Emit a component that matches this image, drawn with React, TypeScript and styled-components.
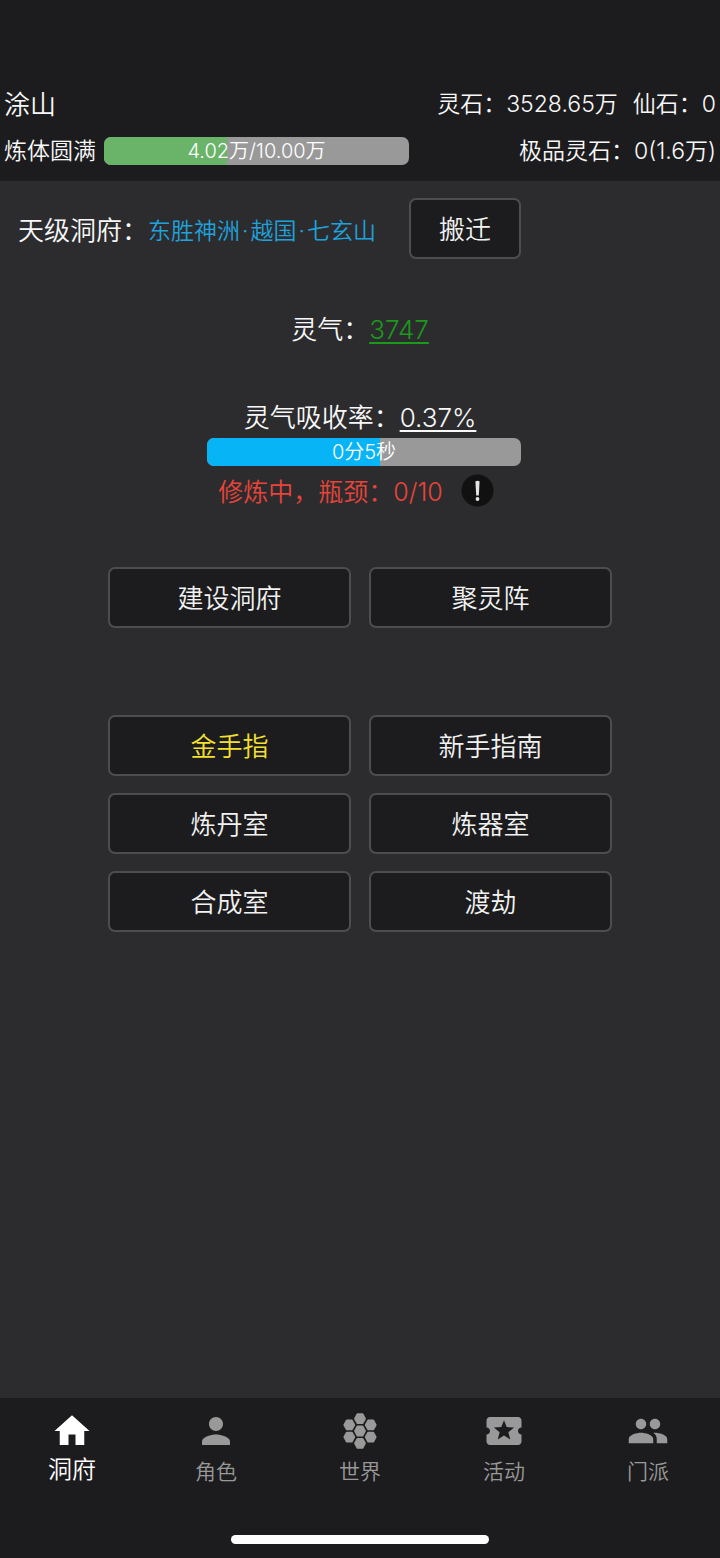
import React from 'react';
import styled, { createGlobalStyle } from 'styled-components';
import { MdHome, MdPerson, MdLocalActivity, MdPeople } from 'react-icons/md';

const GlobalStyle = createGlobalStyle`
  * { box-sizing: border-box; }
  body {
    margin: 0;
    background: #2c2c2e;
    color: #f8f8f8;
    font-family: Inter, "Noto Sans CJK SC", sans-serif;
    font-size: 26px;
    font-weight: 350;
  }
`;

const Page = styled.div`
  min-height: 100vh;
  display: flex;
  flex-direction: column;
`;

const Header = styled.header`
  display: flex;
  flex-direction: column;
  gap: 9px;
  padding: 85px 4px 11px;
  background: #1c1c1e;
`;

const HeaderRow = styled.div`
  display: flex;
  align-items: center;
  justify-content: space-between;
  height: 38px;
  font-size: 23px;
  white-space: nowrap;
`;

const HeaderText = styled.span`
  padding-bottom: 4px;
`;

const PlayerName = styled.h1`
  margin: 0;
  padding-bottom: 4px;
  font-size: 26px;
  font-weight: inherit;
`;

const Group = styled.div<{ $gap: number }>`
  display: flex;
  align-items: center;
  gap: ${(p) => p.$gap}px;
`;

const Track = styled.div<{ $width: number }>`
  position: relative;
  width: ${(p) => p.$width}px;
  height: 28px;
  border-radius: 7px;
  overflow: hidden;
  background: #999999;
`;

const Fill = styled.div<{ $color: string }>`
  height: 100%;
  background: ${(p) => p.$color};
`;

const TrackLabel = styled.span`
  position: absolute;
  inset: 0;
  color: #ffffff;
  font-size: 20px;
  line-height: 29px;
  text-align: center;
`;

const Main = styled.main`
  flex: 1;
  display: flex;
  flex-direction: column;
  padding-top: 17px;
`;

const LocationRow = styled.section`
  display: flex;
  align-items: center;
  padding: 0 18px;
  white-space: nowrap;
`;

const Place = styled.a`
  display: flex;
  align-items: baseline;
  gap: 2px;
  margin-right: 33px;
  color: #1fa2dc;
  font-size: 23px;
  text-decoration: none;
`;

const Button = styled.button<{ $color?: string }>`
  height: 61px;
  padding: 0 28px 2px;
  border: 2px solid #4d4d4f;
  border-radius: 7px;
  background: #1c1c1e;
  color: ${(p) => p.$color ?? '#f2f2f2'};
  font: inherit;
`;

const Stat = styled.section<{ $top: number }>`
  margin-top: ${(p) => p.$top}px;
  line-height: 40px;
  text-align: center;
`;

const StatLink = styled.a<{ $color?: string }>`
  color: ${(p) => p.$color ?? 'inherit'};
  text-decoration: underline;
  text-decoration-thickness: 2px;
  text-underline-offset: 3px;
`;

const Cultivation = styled.div`
  display: flex;
  justify-content: center;
  padding-left: 8px;
`;

const Status = styled.div`
  display: flex;
  align-items: center;
  justify-content: center;
  gap: 18px;
  height: 48px;
  padding-right: 8px;
  color: #e8443a;
  font-size: 25px;
`;

const InfoButton = styled.button`
  display: flex;
  padding: 0;
  border: 0;
  border-radius: 50%;
  background: none;
`;

const ButtonGrid = styled.section<{ $top: number }>`
  display: grid;
  grid-template-columns: 1fr 1fr;
  gap: 17px 18px;
  width: 70%;
  margin: ${(p) => p.$top}px auto 0;
`;

const Footer = styled.footer`
  display: flex;
  flex-direction: column;
  align-items: center;
  justify-content: space-between;
  height: 160px;
  padding: 12px 0 14px;
  background: #1c1c1e;
`;

const Tabs = styled.nav`
  display: flex;
  width: 100%;
`;

const Tab = styled.a<{ $active?: boolean }>`
  flex: 1;
  display: flex;
  flex-direction: column;
  align-items: center;
  color: ${(p) => (p.$active ? '#ffffff' : '#999999')};
  font-size: ${(p) => (p.$active ? 24 : 21)}px;
  line-height: ${(p) => (p.$active ? 36 : 40)}px;
  text-decoration: none;
`;

const HomeIndicator = styled.div`
  width: 258px;
  height: 9px;
  border-radius: 5px;
  background: #ffffff;
`;

const cells = [
  [21, 21],
  [21, 8.7],
  [21, 33.3],
  [10.3, 14.9],
  [31.7, 14.9],
  [10.3, 27.1],
  [31.7, 27.1],
];

const WorldIcon = () => (
  <svg width="42" height="42" viewBox="0 0 42 42" fill="currentColor" stroke="currentColor" strokeWidth="2" strokeLinejoin="round" aria-hidden="true">
    {cells.map(([x, y]) => (
      <path key={`${x}-${y}`} d={`M${x - 4.9} ${y}l2.4-4.4h5l2.4 4.4l-2.4 4.4h-5z`} />
    ))}
  </svg>
);

const AlertIcon = () => (
  <svg width="33" height="33" viewBox="0 0 33 33" aria-hidden="true">
    <circle cx="16.5" cy="16.5" r="16" fill="#111112" />
    <path d="M14.4 7.6q2.1-1.6 4.2 0l-.8 14h-2.6z" fill="#e4e4e4" />
    <circle cx="16.5" cy="25" r="1.9" fill="#e4e4e4" />
  </svg>
);

const placePath = ['东胜神洲', '·', '越国', '·', '七玄山'];

const homeActions = ['建设洞府', '聚灵阵'];

const roomActions: { label: string; color?: string }[] = [
  { label: '金手指', color: '#f5e02d' },
  { label: '新手指南' },
  { label: '炼丹室' },
  { label: '炼器室' },
  { label: '合成室' },
  { label: '渡劫' },
];

const tabs = [
  { label: '洞府', icon: <MdHome size={42} />, active: true },
  { label: '角色', icon: <MdPerson size={42} /> },
  { label: '世界', icon: <WorldIcon /> },
  { label: '活动', icon: <MdLocalActivity size={42} /> },
  { label: '门派', icon: <MdPeople size={42} /> },
];

const Progress = ({ label, width, value, color }: { label: string; width: number; value: number; color: string }) => (
  <Track $width={width} role="progressbar" aria-label={label} aria-valuenow={value} aria-valuemin={0} aria-valuemax={100}>
    <Fill $color={color} style={{ width: `${value}%` }} />
    <TrackLabel>{label}</TrackLabel>
  </Track>
);

export default function App() {
  return (
    <Page>
      <GlobalStyle />
      <Header>
        <HeaderRow>
          <PlayerName>涂山</PlayerName>
          <Group $gap={15}>
            <HeaderText>灵石：3528.65万</HeaderText>
            <HeaderText>仙石：0</HeaderText>
          </Group>
        </HeaderRow>
        <HeaderRow>
          <Group $gap={8}>
            <HeaderText>炼体圆满</HeaderText>
            <Progress label="4.02万/10.00万" width={305} value={40.2} color="#6ab469" />
          </Group>
          <HeaderText>极品灵石：0(1.6万)</HeaderText>
        </HeaderRow>
      </Header>
      <Main>
        <LocationRow>
          <span>天级洞府：</span>
          <Place href="#place">
            {placePath.map((part, i) => (
              <span key={i}>{part}</span>
            ))}
          </Place>
          <Button type="button">搬迁</Button>
        </LocationRow>
        <Stat $top={51}>
          灵气：<StatLink href="#aura" $color="#1a991a">3747</StatLink>
        </Stat>
        <Stat $top={48}>
          灵气吸收率：<StatLink href="#rate">0.37%</StatLink>
        </Stat>
        <Cultivation>
          <Progress label="0分5秒" width={314} value={55} color="#07b4f5" />
        </Cultivation>
        <Status>
          <span>修炼中，瓶颈：0/10</span>
          <InfoButton type="button" aria-label="瓶颈说明">
            <AlertIcon />
          </InfoButton>
        </Status>
        <ButtonGrid $top={53}>
          {homeActions.map((label) => (
            <Button key={label} type="button">{label}</Button>
          ))}
        </ButtonGrid>
        <ButtonGrid $top={87}>
          {roomActions.map(({ label, color }) => (
            <Button key={label} type="button" $color={color}>{label}</Button>
          ))}
        </ButtonGrid>
      </Main>
      <Footer>
        <Tabs>
          {tabs.map(({ label, icon, active }) => (
            <Tab key={label} href={`#${label}`} $active={active} aria-current={active ? 'page' : undefined}>
              {icon}
              {label}
            </Tab>
          ))}
        </Tabs>
        <HomeIndicator />
      </Footer>
    </Page>
  );
}
